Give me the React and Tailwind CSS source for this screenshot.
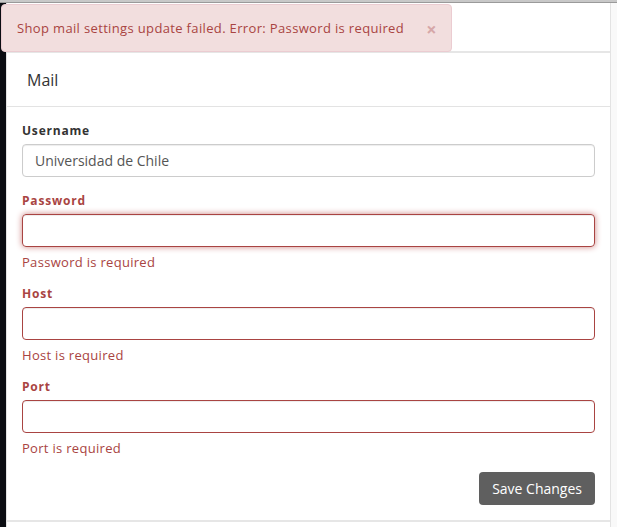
import { useState } from "react";

const Field = ({ label, value, error, focused }) => (
  <div className="flex flex-col">
    <label
      className={`text-[12px] font-bold leading-[17px] tracking-[0.8px] ${error ? "text-[#a94442]" : "text-[#333]"}`}
    >
      {label}
    </label>
    <input
      type="text"
      defaultValue={value}
      className={`mt-[5px] h-[33px] w-full rounded-[4px] border px-[12px] text-[14px] text-[#555] outline-none ${
        error
          ? focused
            ? "border-[#a94442] shadow-[inset_0_1px_1px_rgba(0,0,0,0.075),0_0_6px_#ce8483]"
            : "border-[#a94442] shadow-[inset_0_1px_1px_rgba(0,0,0,0.075)]"
          : "border-[#ccc] shadow-[inset_0_1px_1px_rgba(0,0,0,0.075)]"
      }`}
    />
    {error && (
      <p className="mt-[7px] text-[13px] leading-[16px] tracking-[0.3px] text-[#a94442]">{error}</p>
    )}
  </div>
);

const App = () => {
  const [showAlert, setShowAlert] = useState(true);

  return (
    <div
      className="relative flex h-[527px] w-[617px] flex-col overflow-hidden bg-[#f9f9f9]"
      style={{ fontFamily: '"Open Sans", "Noto Sans", sans-serif' }}
    >
      <div className="h-[3px] w-full shrink-0 border-b border-[#9a9a9a] bg-[#c8c8c8]" />
      <div className="flex flex-1">
        <div className="w-[6px] shrink-0 bg-[#0b0d12]" />
        <div className="flex w-[605px] shrink-0 flex-col border-x border-[#e3e3e3] bg-white">
          <div className="h-[50px] shrink-0 border-b-2 border-[#e6e6e6]" />
          <div className="flex h-[54px] shrink-0 items-center border-b border-[#e3e3e3] px-[20px]">
            <h2 className="text-[16px] text-[#333]">Mail</h2>
          </div>
          <form className="flex flex-col gap-[15px] px-[15px] pb-[15px] pt-[15px]">
            <Field label="Username" value="Universidad de Chile" />
            <Field label="Password" error="Password is required" focused />
            <Field label="Host" error="Host is required" />
            <Field label="Port" error="Port is required" />
            <div className="flex justify-end pt-[1px]">
              <button
                type="button"
                className="h-[33px] rounded-[4px] bg-[#5f5f5f] px-[13px] text-[14px] text-white"
              >
                Save Changes
              </button>
            </div>
          </form>
          <div className="h-[2px] w-full bg-[#e6e6e6]" />
          <div className="flex-1 bg-white" />
        </div>
        <div className="flex-1 bg-[#f9f9f9]" />
      </div>

      {showAlert && (
        <div className="absolute left-[1px] top-[4px] flex h-[48px] w-[451px] items-center justify-between rounded-[4px] border border-[#ebccd1] bg-[#f2dede] pl-[15px] pr-[14px] pt-[1px] text-[13px] tracking-[0.35px] text-[#a94442]">
          <span>Shop mail settings update failed. Error: Password is required</span>
          <button
            type="button"
            onClick={() => setShowAlert(false)}
            className="text-[18px] font-bold leading-none text-[#d6a7a8]"
          >
            ×
          </button>
        </div>
      )}
    </div>
  );
};

export default App;
